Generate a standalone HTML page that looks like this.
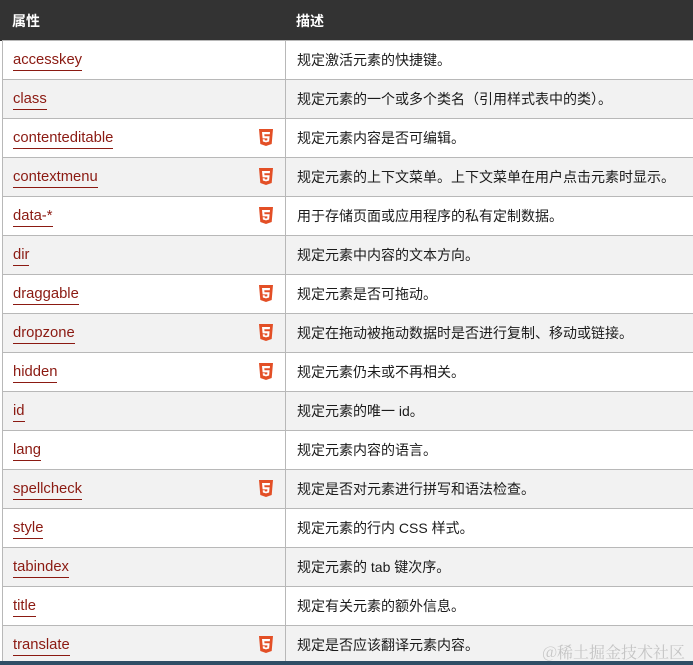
<!DOCTYPE html>
<html><head><meta charset="utf-8"><style>
*{margin:0;padding:0;box-sizing:border-box}
body{width:693px;height:665px;overflow:hidden;background:#fff;font-family:"Liberation Sans","Noto Sans CJK SC",sans-serif;position:relative}
.hd{position:absolute;left:0;top:0;width:693px;height:41px;background:#333;color:#fff;font-weight:bold;font-size:14px}
.hd span{position:absolute;top:11px}
.row{position:absolute;left:2px;width:691px;height:39px;border-top:1px solid #b8b8b8;border-left:1px solid #b8b8b8}
.row.g{background:#f2f2f2}
.row .a{position:absolute;left:10px;top:10px;font-size:14.8px;color:#8b1a12;border-bottom:1px solid #8b1a12;line-height:19px}
.row .d{position:absolute;left:294px;top:10px;font-size:14px;color:#1b1b1b;line-height:18px}
.row .v{position:absolute;left:282px;top:0;width:1px;height:39px;background:#b8b8b8}
.row svg{position:absolute;left:255px;top:10px}
.wm{position:absolute;right:8px;top:640px;font-size:16px;color:#c4c4c4;font-family:"Noto Serif CJK SC",serif}
.bb{position:absolute;left:0;top:661px;width:693px;height:4px;background:#2f4e66}
</style></head><body>
<div class="hd"><span style="left:12px">属性</span><span style="left:296px">描述</span></div>
<div id="t"></div>
<div class="wm">@稀土掘金技术社区</div>
<div class="bb"></div>
<script>
var r=[["accesskey","规定激活元素的快捷键。",0],["class","规定元素的一个或多个类名（引用样式表中的类）。",0],["contenteditable","规定元素内容是否可编辑。",1],["contextmenu","规定元素的上下文菜单。上下文菜单在用户点击元素时显示。",1],["data-*","用于存储页面或应用程序的私有定制数据。",1],["dir","规定元素中内容的文本方向。",0],["draggable","规定元素是否可拖动。",1],["dropzone","规定在拖动被拖动数据时是否进行复制、移动或链接。",1],["hidden","规定元素仍未或不再相关。",1],["id","规定元素的唯一 id。",0],["lang","规定元素内容的语言。",0],["spellcheck","规定是否对元素进行拼写和语法检查。",1],["style","规定元素的行内 CSS 样式。",0],["tabindex","规定元素的 tab 键次序。",0],["title","规定有关元素的额外信息。",0],["translate","规定是否应该翻译元素内容。",1]];
var ic='<svg width="16" height="18" viewBox="0 0 16 18"><path d="M1 0h14l-1.3 15L8 17 2.3 15z" fill="#e34f26"/><path d="M4 3h8l-.2 2.2H6.3l.2 2H11.6l-.5 5.3L8 13.4l-3.1-.9-.2-2.3h2l.1 1 1.2.3 1.3-.3.1-1.8H4.6z" fill="#fff"/></svg>';
var h='';
r.forEach(function(x,i){h+='<div class="row'+(i%2?' g':'')+'" style="top:'+(40+i*39)+'px"><span class="a">'+x[0]+'</span>'+(x[2]?ic:'')+'<div class="v"></div><span class="d">'+x[1]+'</span></div>';});
document.getElementById('t').innerHTML=h;
</script>
</body></html>
